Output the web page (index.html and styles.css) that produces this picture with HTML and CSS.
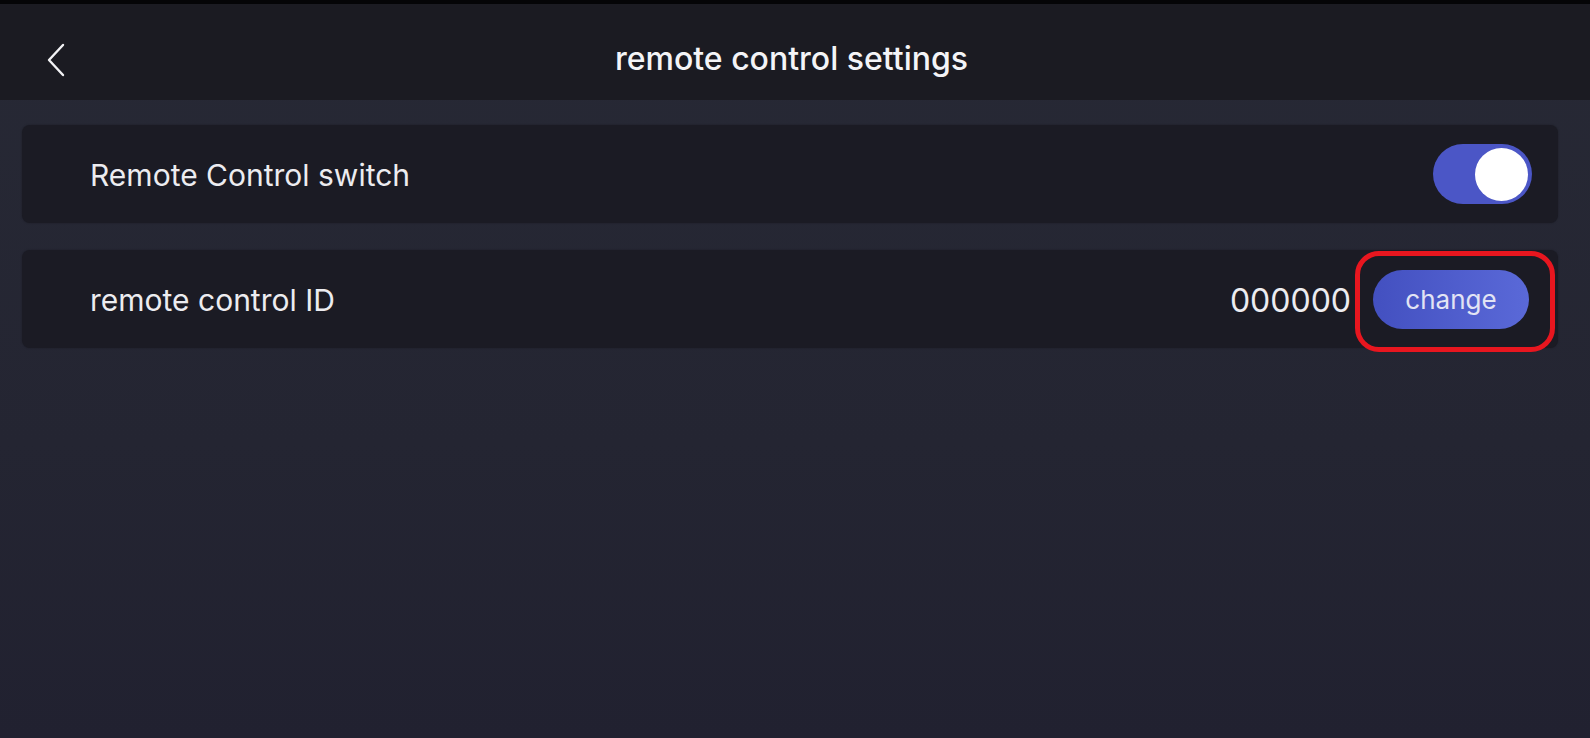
FILE: index.html
```html
<!DOCTYPE html>
<html>
<head>
<meta charset="utf-8">
<link rel="stylesheet" href="styles.css">
</head>
<body>
<div class="topstrip"></div>
<header class="header">
  <button class="back" aria-label="back">
    <svg width="22" height="34" viewBox="0 0 22 34"><path d="M18 2 L4 17 L18 32" fill="none" stroke="#f2f2f5" stroke-width="2.4" stroke-linecap="round" stroke-linejoin="round"/></svg>
  </button>
  <h1 class="title">remote control settings</h1>
</header>
<main class="content">
  <section class="card">
    <span class="label">Remote Control switch</span>
    <div class="toggle"><div class="knob"></div></div>
  </section>
  <section class="card">
    <span class="label">remote control ID</span>
    <div class="right">
      <span class="value">000000</span>
      <div class="btn-wrap">
        <button class="change">change</button>
        <div class="ring"></div>
      </div>
    </div>
  </section>
</main>
</body>
</html>
```
FILE: styles.css
```css
html, body {
  margin: 0;
  padding: 0;
  height: 100%;
}
body {
  background: linear-gradient(#272935 0%, #242532 60%, #212130 100%);
  font-family: Inter, "Open Sans", Roboto, sans-serif;
  color: #f2f2f5;
  overflow: hidden;
}
.topstrip {
  height: 4px;
  background: #050507;
}
.header {
  height: 96px;
  box-sizing: border-box;
  padding: 12px 7px 0 0;
  background: #1b1b22;
  display: flex;
  align-items: center;
  justify-content: center;
  position: relative;
}
.back {
  position: absolute;
  left: 45px;
  top: 39px;
  background: none;
  border: 0;
  padding: 0;
  display: flex;
}
.title {
  margin: 0;
  font-size: 32px;
  font-weight: 500;
  color: #f4f4f7;
  letter-spacing: 0;
}
.content {
  padding: 25px 32px 0 22px;
  display: flex;
  flex-direction: column;
  gap: 27px;
}
.card {
  height: 98px;
  background: #1b1b24;
  border-radius: 8px;
  display: flex;
  align-items: center;
  justify-content: space-between;
  padding: 0 26px 0 68px;
  box-shadow: 0 0 2px rgba(0,0,0,0.3);
}
.label {
  font-size: 30px;
  font-weight: 400;
  color: #ececf0;
  padding-top: 2px;
}
.toggle {
  width: 99px;
  height: 60px;
  border-radius: 30px;
  background: #4b56c6;
  display: flex;
  align-items: center;
  justify-content: flex-end;
  padding: 0 4px;
  box-sizing: border-box;
}
.knob {
  width: 53px;
  height: 53px;
  border-radius: 50%;
  background: #ffffff;
}
.right {
  display: flex;
  align-items: center;
  gap: 22px;
  margin-right: 3px;
}
.value {
  font-size: 32px;
  color: #ececf0;
  padding-top: 2px;
}
.btn-wrap {
  position: relative;
  display: flex;
}
.change {
  width: 156px;
  height: 59px;
  border-radius: 30px;
  border: 0;
  background: linear-gradient(90deg, #4350c0, #5a69d8);
  color: #e2e4f4;
  font-family: Inter, "Open Sans", Roboto, sans-serif;
  font-size: 26px;
  padding: 0;
}
.ring {
  position: absolute;
  left: -18px;
  top: -19px;
  width: 200px;
  height: 101px;
  box-sizing: border-box;
  border: 5px solid #e8161f;
  border-radius: 24px;
  pointer-events: none;
}
```
